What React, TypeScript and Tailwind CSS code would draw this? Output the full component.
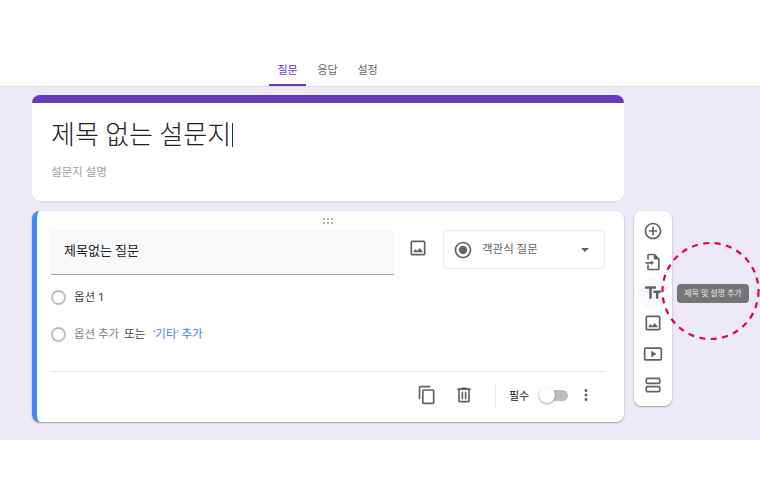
const FONT = "font-['Roboto','Noto_Sans_CJK_KR',sans-serif]";

function Icon({ d, className = "h-5 w-5 text-[#5f6368]" }: { d: string; className?: string }) {
  return (
    <svg viewBox="0 0 24 24" fill="currentColor" fillRule="evenodd" className={className}>
      <path d={d} />
    </svg>
  );
}

const icons = {
  add: "M13 7h-2v4H7v2h4v4h2v-4h4v-2h-4V7zm-1-5C6.48 2 2 6.48 2 12s4.48 10 10 10 10-4.48 10-10S17.52 2 12 2zm0 18c-4.41 0-8-3.59-8-8s3.59-8 8-8 8 3.59 8 8-3.59 8-8 8z",
  importFile: "M14 2H7a2 2 0 0 0-2 2v5h2V4h6v5h5v11H7v-5H5v5a2 2 0 0 0 2 2h11a2 2 0 0 0 2-2V8l-6-6zM10 10v2H3v2h7v2l3-3-3-3z",
  title: "M2.5 4v3h5v12h3V7h5V4h-13zm19 5h-9v3h3v7h3v-7h3V9z",
  image: "M19 5v14H5V5h14m0-2H5c-1.1 0-2 .9-2 2v14c0 1.1.9 2 2 2h14c1.1 0 2-.9 2-2V5c0-1.1-.9-2-2-2zm-4.86 8.86l-3 3.87L9 13.14 6 17h12l-3.86-5.14z",
  video: "M21 4H3a2 2 0 0 0-2 2v12a2 2 0 0 0 2 2h18a2 2 0 0 0 2-2V6a2 2 0 0 0-2-2zm0 14H3V6h18v12zM10 8v8l6-4-6-4z",
  section: "M19 3H5a2 2 0 0 0-2 2v4a2 2 0 0 0 2 2h14a2 2 0 0 0 2-2V5a2 2 0 0 0-2-2zm0 6H5V5h14v4zM19 13H5a2 2 0 0 0-2 2v4a2 2 0 0 0 2 2h14a2 2 0 0 0 2-2v-4a2 2 0 0 0-2-2zm0 6H5v-4h14v4z",
  copy: "M16 1H4c-1.1 0-2 .9-2 2v14h2V3h12V1zm3 4H8c-1.1 0-2 .9-2 2v14c0 1.1.9 2 2 2h11c1.1 0 2-.9 2-2V7c0-1.1-.9-2-2-2zm0 16H8V7h11v14z",
  trash: "M15 4V3H9v1H4v2h1v13c0 1.1.9 2 2 2h10c1.1 0 2-.9 2-2V6h1V4h-5zm2 15H7V6h10v13zM9 8h2v9H9zm4 0h2v9h-2z",
  more: "M12 8c1.1 0 2-.9 2-2s-.9-2-2-2-2 .9-2 2 .9 2 2 2zm0 2c-1.1 0-2 .9-2 2s.9 2 2 2 2-.9 2-2-.9-2-2-2zm0 6c-1.1 0-2 .9-2 2s.9 2 2 2 2-.9 2-2-.9-2-2-2z",
  radio: "M12 7c-2.76 0-5 2.24-5 5s2.24 5 5 5 5-2.24 5-5-2.24-5-5-5zm0-5C6.48 2 2 6.48 2 12s4.48 10 10 10 10-4.48 10-10S17.52 2 12 2zm0 18c-4.42 0-8-3.58-8-8s3.58-8 8-8 8 3.58 8 8-3.58 8-8 8z",
};

function Tabs() {
  return (
    <div className="flex h-[87px] items-end border-b border-[#e0e0e0] bg-white pl-[269px]">
      <div className="flex h-[30px] w-[37px] items-center justify-center border-b-2 border-[#673ab7] pt-[3px] text-[11px] text-[#673ab7]">질문</div>
      <div className="ml-[3px] flex h-[30px] w-[37px] items-center justify-center border-b-2 border-transparent pt-[3px] text-[11px] text-[#5f6368]">응답</div>
      <div className="ml-[3px] flex h-[30px] w-[37px] items-center justify-center border-b-2 border-transparent pt-[3px] text-[11px] text-[#5f6368]">설정</div>
    </div>
  );
}

function TitleCard() {
  return (
    <div className="h-[106px] overflow-hidden rounded-lg bg-white shadow-[0_1px_1px_rgba(0,0,0,0.08)]">
      <div className="h-2 bg-[#673ab7]" />
      <div className="pl-[19px] pt-[20px]">
        <div className="flex h-[24px] items-center text-[26px] font-light leading-none text-[#202124]">
          제목 없는 설문지
          <span className="ml-[1px] h-[24px] w-px bg-[#1a237e]" />
        </div>
        <div className="mt-[17px] text-[11.5px] leading-4 text-[#9aa0a6]">설문지 설명</div>
      </div>
    </div>
  );
}

function QuestionCard() {
  return (
    <div className="flex h-[211px] flex-col rounded-lg border-l-[5px] border-[#4285f4] bg-white pl-[14px] pr-[19px] shadow-[0_1px_2px_rgba(0,0,0,0.35)]">
      <div className="relative flex items-start pt-[19px]">
        <div className="absolute left-[272px] top-[7px] grid grid-cols-3 gap-[2px]">
          {[0, 1, 2, 3, 4, 5].map((i) => (
            <span key={i} className="h-[2px] w-[2px] rounded-full bg-[#9e9e9e]" />
          ))}
        </div>
        <div className="flex h-[45px] w-[343px] items-center border-b border-[#9aa0a6] bg-[#f8f9fa] pb-[2px] pl-[13px] text-[13px] text-[#202124]">
          제목없는 질문
        </div>
        <div className="ml-[14px] mt-[8px] w-[20px]">
          <Icon d={icons.image} className="h-[20px] w-[20px] text-[#5f6368]" />
        </div>
        <div className="ml-[15px] flex h-[39px] w-[162px] items-center rounded border border-[#e8eaed] pl-[9px] pr-[15px]">
          <Icon d={icons.radio} className="h-[20px] w-[20px] text-[#5f6368]" />
          <span className="ml-[9px] flex-1 text-[11.5px] text-[#5f6368]">객관식 질문</span>
          <span className="h-0 w-0 border-x-[4px] border-t-[4px] border-x-transparent border-t-[#5f6368]" />
        </div>
      </div>
      <div className="mt-[13px] flex h-[18px] items-center">
        <span className="h-[15px] w-[15px] rounded-full border-2 border-[#bdbdbd]" />
        <span className="ml-[8px] pt-[2px] text-[11.5px] text-[#3c4043]">옵션 1</span>
      </div>
      <div className="mt-[19px] flex h-[18px] items-center">
        <span className="h-[15px] w-[15px] rounded-full border-2 border-[#bdbdbd]" />
        <span className="ml-[8px] pt-[2px] text-[11.5px] text-[#80868b]">옵션 추가</span>
        <span className="ml-[5px] pt-[2px] text-[11.5px] text-[#3c4043]">또는</span>
        <span className="ml-[8px] pt-[2px] text-[11.5px] text-[#4285f4]">'기타' 추가</span>
      </div>
      <div className="mt-[28px] border-t border-[#e8eaed]" />
      <div className="mt-[11px] flex items-center">
        <div className="ml-[366px] flex items-center">
          <Icon d={icons.copy} className="h-[20px] w-[20px] text-[#5f6368]" />
          <Icon d={icons.trash} className="ml-[17px] h-[20px] w-[20px] text-[#5f6368]" />
        </div>
        <div className="ml-[21px] h-[24px] border-l border-[#e8eaed]" />
        <span className="ml-[13px] pt-[4px] text-[11px] text-[#202124]">필수</span>
        <div className="relative ml-[10px] h-[11px] w-[29px] rounded-full bg-[#bdbdbd]">
          <span className="absolute left-0 -top-[3px] h-[16px] w-[16px] rounded-full bg-white shadow-[0_1px_2px_rgba(0,0,0,0.4)]" />
        </div>
        <Icon d={icons.more} className="ml-[9px] h-[18px] w-[18px] text-[#5f6368]" />
      </div>
    </div>
  );
}

function Toolbar() {
  return (
    <div className="flex h-[195px] w-[38px] flex-col items-center rounded-lg bg-white pt-[10px] shadow-[0_1px_2px_rgba(0,0,0,0.35)]">
      <Icon d={icons.add} className="h-[20px] w-[20px] text-[#5f6368]" />
      <Icon d={icons.importFile} className="mt-[11px] h-[20px] w-[20px] text-[#5f6368]" />
      <div className="mt-[6px] flex h-[30px] w-[30px] items-center justify-center rounded-full bg-[#f8f9fa]">
        <Icon d={icons.title} className="h-[20px] w-[20px] text-[#5f6368]" />
      </div>
      <Icon d={icons.image} className="mt-[5px] h-[20px] w-[20px] text-[#5f6368]" />
      <Icon d={icons.video} className="mt-[11px] h-[20px] w-[20px] text-[#5f6368]" />
      <Icon d={icons.section} className="mt-[11px] h-[20px] w-[20px] text-[#5f6368]" />
    </div>
  );
}

export default function App() {
  return (
    <div className={`relative h-[500px] w-[760px] overflow-hidden bg-white ${FONT}`}>
      <Tabs />
      <div className="flex h-[353px] gap-[10px] bg-[#ede9f7] pl-[32px] pt-[8px]">
        <div className="flex w-[592px] flex-col gap-[10px]">
          <TitleCard />
          <QuestionCard />
        </div>
        <div className="pt-[116px]">
          <Toolbar />
        </div>
      </div>
      {/* tooltip and the red highlight drawn over the screenshot */}
      <div className="absolute left-[677px] top-[284px] flex h-[19px] w-[72px] items-center justify-center rounded-sm bg-[#757575] text-[8px] text-[#e8e8e8]">
        제목 및 설명 추가
      </div>
      <svg className="absolute left-[660px] top-[241px] h-[100px] w-[100px]" viewBox="0 0 100 100" fill="none">
        <circle cx="50.5" cy="50" r="48" stroke="#e6003c" strokeWidth="2.2" strokeDasharray="6 5.5" />
      </svg>
    </div>
  );
}
